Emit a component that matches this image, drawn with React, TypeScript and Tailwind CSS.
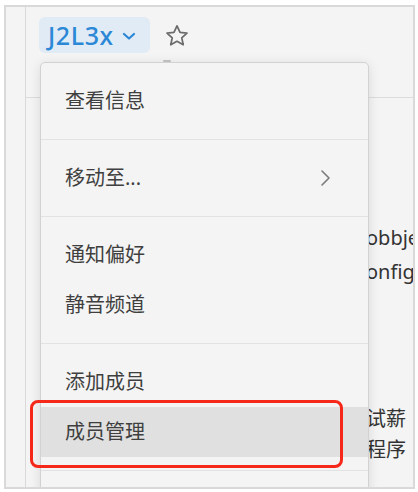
import React from "react";

const font = { fontFamily: '"Noto Sans", "Noto Sans CJK SC", sans-serif' };

function Item({ label, active, arrow }: { label: string; active?: boolean; arrow?: boolean }) {
  return (
    <div
      className={`h-[50px] flex items-center justify-between pl-[24px] pr-[36px] text-[20px] text-[#3f3f3f] ${
        active ? "bg-[#e0e0e0]" : ""
      }`}
    >
      <span className="leading-none">{label}</span>
      {arrow && (
        <svg width="12" height="18" viewBox="0 0 12 18" fill="none">
          <path d="M2 2l7 7-7 7" stroke="#7a7a7a" strokeWidth="1.6" strokeLinecap="round" strokeLinejoin="round" />
        </svg>
      )}
    </div>
  );
}

function Section({ children, last }: { children: React.ReactNode; last?: boolean }) {
  return <div className={`py-[13px] ${last ? "" : "border-b border-[#e2e2e2]"}`}>{children}</div>;
}

export default function App() {
  return (
    <div className="w-[418px] h-[492px] bg-white overflow-hidden" style={font}>
      <div className="ml-[4px] mt-[5px] w-[411px] h-[484px] border-2 border-[#d9d9d9] bg-[#f4f4f4] relative overflow-hidden flex">
        {/* sidebar */}
        <div className="w-[20px] shrink-0 border-r border-[#d9d9d9]" />
        {/* main */}
        <div className="flex-1 flex flex-col">
          <div className="h-[91px] shrink-0 border-b border-[#dcdcdc] pl-[13px] pt-[10px] flex items-start gap-[14px]">
            <div className="h-[36px] w-[111px] pl-[9px] rounded-[6px] bg-[#e1ebf5] flex items-center gap-[8px]">
              <span className="text-[25px] font-medium text-[#2a88d6] leading-none tracking-[0.6px]">J2L3x</span>
              <svg width="14" height="9" viewBox="0 0 14 9" fill="none" className="mt-[2px]">
                <path d="M2 2l5 4.5L12 2" stroke="#2a88d6" strokeWidth="2.2" strokeLinecap="round" strokeLinejoin="round" />
              </svg>
            </div>
            <svg width="26" height="26" viewBox="0 0 24 24" fill="none" className="mt-[6px]">
              <path
                d="M12 2.6l2.8 6 6.4.7-4.8 4.4 1.35 6.4L12 16.9l-5.75 3.2 1.35-6.4-4.8-4.4 6.4-.7z"
                stroke="#6b6b6b"
                strokeWidth="1.6"
                strokeLinejoin="round"
              />
            </svg>
          </div>
          <div className="flex-1 pl-[340px] text-[20px] text-[#333] whitespace-nowrap">
            <div className="mt-[123px] leading-[34px]">
              <div>obbje</div>
              <div>onfig</div>
            </div>
            <div className="mt-[114px] leading-[31px]">
              <div>试薪</div>
              <div>程序</div>
            </div>
          </div>
        </div>

        {/* dropdown menu */}
        <div className="absolute left-[34px] top-[55px] w-[329px] h-[460px] rounded-[5px] border border-[#d2d2d2] bg-[#f4f4f4] shadow-[0_2px_12px_rgba(0,0,0,0.11)]">
          <div className="absolute left-[122px] -top-[3px] w-[8px] h-[2px] rounded-full bg-[#bdbdbd]" />
          <Section>
            <Item label="查看信息" />
          </Section>
          <Section>
            <Item label="移动至..." arrow />
          </Section>
          <Section>
            <Item label="通知偏好" />
            <Item label="静音频道" />
          </Section>
          <Section>
            <Item label="添加成员" />
            <Item label="成员管理" active />
          </Section>
          <Section last>
            <div className="h-[50px]" />
          </Section>
        </div>

        {/* annotation */}
        <div className="absolute left-[24px] top-[393px] w-[313px] h-[68px] rounded-[8px] border-[3px] border-[#f5281a]" />
      </div>
    </div>
  );
}
